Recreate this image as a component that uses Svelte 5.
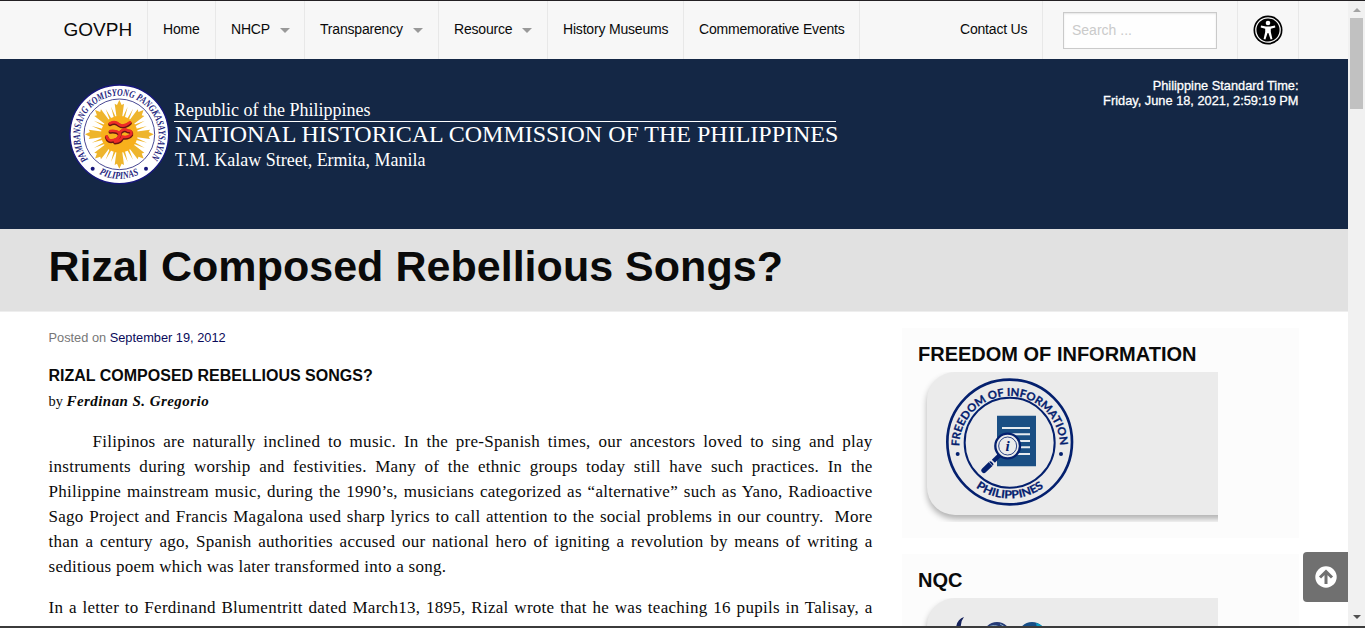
<script>
  const nav = [
    { label: 'Home', width: 68 },
    { label: 'NHCP', width: 89, menu: true },
    { label: 'Transparency', width: 134, menu: true },
    { label: 'Resource', width: 109, menu: true },
    { label: 'History Museums', width: 136 },
    { label: 'Commemorative Events', width: 176 }
  ];
  const lines = [
    'Filipinos are naturally inclined to music. In the pre-Spanish times, our ancestors loved to sing and play',
    'instruments during worship and festivities. Many of the ethnic groups today still have such practices. In the',
    'Philippine mainstream music, during the 1990’s, musicians categorized as “alternative” such as Yano, Radioactive',
    'Sago Project and Francis Magalona used sharp lyrics to call attention to the social problems in our country.\u00a0 More',
    'than a century ago, Spanish authorities accused our national hero of igniting a revolution by means of writing a',
    'seditious poem which was later transformed into a song.'
  ];
  const rays = [0, 45, 90, 135, 180, 225, 270, 315];
</script>

<div class="window">
  <div class="page">
    <nav>
      <a class="brand" href="#top">GOVPH</a>
      {#each nav as item}
        <a class="item" href="#top" style="width: {item.width}px">
          {item.label}
          {#if item.menu}<i class="caret"></i>{/if}
        </a>
      {/each}
      <a class="item contact" href="#top">Contact Us</a>
      <div class="search"><input type="text" placeholder="Search ..." /></div>
      <div class="access">
        <svg width="30" height="30" viewBox="0 0 30 30">
          <circle cx="15" cy="15" r="14.5" />
          <circle cx="15" cy="15" r="12.2" fill="none" stroke="#f7f7f7" stroke-width="1.3" />
          <circle cx="15" cy="8" r="2.3" fill="#fff" />
          <path d="M8 10.6l5 1h4l5-1 .3 1.8-4.5 1.4v3.2l1.6 7-1.8.6L15.4 18h-.8l-2.2 6.6-1.8-.6 1.6-7v-3.2L7.7 12.4z" fill="#fff" />
        </svg>
      </div>
    </nav>

    <header>
      <svg class="seal" width="120" height="120" viewBox="0 0 360 360">
        <defs>
          <path id="sealTop" d="M85 253A118 118 0 1 1 271 253" />
          <path id="sealBottom" d="M117 297A134 134 0 0 0 239 297" />
        </defs>
        <circle cx="178" cy="178" r="148" fill="#fff" stroke="#17177c" stroke-width="4" />
        <circle cx="178" cy="178" r="106" fill="#fff" stroke="#24247d" stroke-width="2.5" />
        {#each rays as angle}
          <g transform="rotate({angle} 178 178)" fill="#eeb52c">
            <path d="M170 130L164 86l7 4 7-15 7 15 7-4-6 44z" />
            <path d="M162 130l-9-35 15 33zM194 130l9-35-15 33z" />
          </g>
        {/each}
        <circle cx="178" cy="178" r="55" fill="#f8b01c" />
        <g fill="none" stroke-linecap="round" stroke-linejoin="round">
          <path d="M150 148q16-9 27 3 14 10 33-6M140 187q4 16 20 11 20-3 20-20-12-10-29-7M177 178q15-19 27-8 12-1 10 10-9 12-27 8-4 14-22 15" stroke="#6b1512" stroke-width="11" />
          <path d="M150 145q16-9 27 3 14 10 33-6M140 184q4 16 20 11 20-3 20-20-12-10-29-7M177 175q15-19 27-8 12-1 10 10-9 12-27 8-4 14-22 15" stroke="#ee2b27" stroke-width="8" />
        </g>
        <g class="sealtext">
          <text><textPath href="#sealTop" textLength="522" lengthAdjust="spacingAndGlyphs">PAMBANSANG KOMISYONG PANGKASAYSAYAN</textPath></text>
          <text><textPath href="#sealBottom" textLength="124" lengthAdjust="spacingAndGlyphs">PILIPINAS</textPath></text>
        </g>
        <circle cx="98" cy="281" r="6" fill="#17177c" />
        <circle cx="258" cy="281" r="6" fill="#17177c" />
      </svg>
      <div class="agency">
        <div class="republic">Republic of the Philippines</div>
        <div class="commission">NATIONAL HISTORICAL COMMISSION OF THE PHILIPPINES</div>
        <div class="address">T.M. Kalaw Street, Ermita, Manila</div>
      </div>
      <div class="time">Philippine Standard Time:<br />Friday, June 18, 2021, 2:59:19 PM</div>
    </header>

    <div class="banner"><h1>Rizal Composed Rebellious Songs?</h1></div>

    <div class="columns">
      <article>
        <div class="meta">Posted on <a href="#top">September 19, 2012</a></div>
        <h2>RIZAL COMPOSED REBELLIOUS SONGS?</h2>
        <div class="by">by <b>Ferdinan S. Gregorio</b></div>
        <div class="para">
          {#each lines as line, i}
            <div class="line" class:indent={i === 0} class:last={i === 5}>{line}</div>
          {/each}
        </div>
        <div class="para">
          <div class="line">In a letter to Ferdinand Blumentritt dated March13, 1895, Rizal wrote that he was teaching 16 pupils in Talisay, a</div>
        </div>
      </article>

      <aside>
        <section>
          <h3>FREEDOM OF INFORMATION</h3>
          <div class="picture">
            <div class="plate">
              <svg class="foi" width="140" height="140" viewBox="0 0 420 420">
                <defs>
                  <path id="foiTop" d="M58 223A151 151 0 1 1 360 223" />
                  <path id="foiBottom" d="M74 314A172 172 0 0 0 344 314" />
                </defs>
                <circle cx="209" cy="210" r="187" fill="#eaeaea" stroke="#04206e" stroke-width="8" />
                <circle cx="209" cy="212" r="135" fill="none" stroke="#04206e" stroke-width="6" />
                <g class="foitext">
                  <text><textPath href="#foiTop" textLength="472" lengthAdjust="spacingAndGlyphs">FREEDOM OF INFORMATION</textPath></text>
                  <text><textPath href="#foiBottom" startOffset="47" textLength="218" lengthAdjust="spacingAndGlyphs">PHILIPPINES</textPath></text>
                </g>
                <circle cx="53" cy="246" r="6" fill="#04206e" />
                <circle cx="363" cy="246" r="6" fill="#04206e" />
                <path d="M171 131h117v152H171z" fill="#1a4f84" />
                <path d="M186 168h84M210 187h60M230 207h40M230 226h40M220 246h50" stroke="#e6ebf0" stroke-width="6" />
                <path d="M180 248l-20 20" stroke="#04206e" stroke-width="13" />
                <path d="M152 276l-20 19" stroke="#04206e" stroke-width="16" stroke-linecap="round" />
                <path d="M146 269l13 14M151 264l13 14" stroke="#eaeaea" stroke-width="2" />
                <circle cx="203" cy="222" r="37" fill="#ebebeb" stroke="#04206e" stroke-width="7" />
                <circle cx="203" cy="222" r="27" fill="none" stroke="#04206e" stroke-width="2.5" />
                <text class="info" x="203" y="238" text-anchor="middle">i</text>
              </svg>
            </div>
          </div>
        </section>
        <section>
          <h3>NQC</h3>
          <div class="picture">
            <div class="plate">
              <svg class="nqc" width="140" height="30" viewBox="0 0 140 30">
                <path d="M16 30q1-9 8-11-4 5-3 11z" fill="#16235c" />
                <circle cx="57" cy="38" r="14" fill="#243a76" />
                <path d="M48 29q7-3 11 0M60 26l5 3" stroke="#84a5bf" fill="none" />
                <circle cx="92" cy="38" r="14" fill="#174e87" />
                <path d="M96 25q5 1 8 5h-7z" fill="#0a9ac2" />
              </svg>
            </div>
          </div>
        </section>
      </aside>
    </div>
  </div>

  <div class="scrollbar">
    <i class="up"></i>
    <div class="thumb"></div>
    <i class="down"></i>
  </div>

  <a class="totop" href="#top" aria-label="Back to top">
    <svg width="22" height="22" viewBox="0 0 22 22">
      <circle cx="11" cy="11" r="10.7" fill="#fff" />
      <path d="M11 18V6M5 11.5l6-6 6 6" fill="none" stroke="#707070" stroke-width="3" />
    </svg>
  </a>
</div>

<style>
  :global(body) { overflow: hidden; background: #fff; }
  * { box-sizing: border-box; }
  a { color: inherit; text-decoration: none; }
  svg { display: block; }
  .window {
    position: relative;
    display: flex;
    width: 1365px;
    height: 628px;
    overflow: hidden;
    border-top: 1px solid #232023;
    border-bottom: 2px solid #3b3b3b;
    font-family: "Liberation Sans", Arial, sans-serif;
    color: #0a0a0a;
  }
  .page { width: 1348px; height: 625px; overflow: hidden; }
  nav { display: flex; height: 58px; padding-left: 49px; background: #f7f7f7; font-size: 14px; line-height: 57px; }
  .brand { width: 99px; padding-left: 14.5px; border-right: 1px solid #e8e8e8; font-size: 19px; }
  .item { display: flex; align-items: center; padding-left: 15px; border-right: 1px solid #e8e8e8; white-space: nowrap; line-height: 56px; padding-bottom: 2px; letter-spacing: -.19px; }
  .caret { margin: 3px 0 0 10px; border: 5px solid transparent; border-top-color: #999; border-bottom: 0; }
  .contact { width: 98px; margin-left: 85px; }
  .search { width: 195px; padding: 11px 20px; border-right: 1px solid #e8e8e8; }
  input { display: block; width: 154px; height: 37px; padding: 0 8px 2px; border: 1px solid #cacaca; border-radius: 0; background: #fefefe; box-shadow: inset 0 1px 2px rgba(10, 10, 10, .1); font: 14px "Liberation Sans", Arial, sans-serif; }
  input::placeholder { color: #cacaca; }
  .access { width: 61px; padding: 14px 0 0 15px; border-right: 1px solid #e8e8e8; }
  header { display: flex; height: 170px; padding-left: 60px; background: #142745; color: #fff; }
  .seal { margin-top: 16px; flex: none; }
  .sealtext { font: italic bold 31px "Liberation Serif", serif; fill: #24247d; }
  .agency { margin: 40px 0 0 -6px; width: 670px; font-family: "Liberation Serif", "Times New Roman", serif; white-space: nowrap; font-size: 18px; }
  .republic { height: 23px; width: 662px; line-height: 22px; border-bottom: 1px solid #fff; }
  .commission { padding-left: 1px; height: 26px; font-size: 24px; line-height: 25px; }
  .address { padding-left: 1px; line-height: 25px; }
  .time { margin: 20px 49.5px 0 auto; text-align: right; font-size: 12.8px; line-height: 14.7px; -webkit-text-stroke: .3px #fff; }
  .banner { height: 83px; padding: 12px 0 0 48.5px; background: #e1e1e1; border-bottom: 1px solid #eee; }
  h1 { margin: 0; font-size: 43px; line-height: 50px; letter-spacing: .03px; }
  .columns { display: flex; justify-content: space-between; padding: 16px 49px 0 48.5px; }
  article { width: 824px; }
  .meta { line-height: 20px; font-size: 12.8px; color: #777; }
  .meta a { color: #0a0a5a; }
  h2 { margin: 17px 0 0; font-size: 16px; line-height: 22px; }
  .by { margin-top: 3px; font: 14.4px/22px "Liberation Serif", Georgia, serif; }
  .by b { font-style: italic; font-size: 15px; letter-spacing: .44px; }
  .para { margin: 17px 0 0; font: 17px/25px "Liberation Serif", Georgia, serif; letter-spacing: .27px; }
  .para + .para { margin-top: 16px; }
  .line { height: 25px; text-align: justify; text-align-last: justify; }
  .indent { padding-left: 44px; }
  .last { text-align-last: left; }
  aside { width: 397px; }
  section { height: 210px; margin-bottom: 16px; padding: 12px 16px 0; background: #fcfcfc; }
  h3 { margin: 0; height: 32px; font-size: 20px; line-height: 28px; }
  .picture { width: 300px; height: 150px; padding-left: 9px; overflow: hidden; }
  .plate { width: 330px; height: 143px; border-radius: 28px 0 0 28px; background: #ebebeb; box-shadow: 0 4px 6px rgba(0, 0, 0, .3); }
  .foi { margin-left: 13px; }
  .foitext { font: bold 33px Lato, sans-serif; fill: #04206e; stroke: #04206e; stroke-width: .8px; }
  .info { font: italic bold 45px "Liberation Serif", serif; fill: #04206e; }
  .nqc { margin-left: 13px; }
  .scrollbar { display: flex; flex-direction: column; align-items: center; width: 17px; background: #f1f1f1; }
  .up { margin-top: 7px; border: 4px solid transparent; border-top: 0; border-bottom-color: #a3a3a3; }
  .thumb { margin-top: 6px; width: 13px; height: 91px; background: #c1c1c1; }
  .down { margin: auto 0 7px; border: 4px solid transparent; border-bottom: 0; border-top-color: #505050; }
  .totop { position: absolute; right: 17px; top: 551px; display: grid; place-items: center; width: 45px; height: 50px; border-radius: 4px 0 0 4px; background: #707070; }
</style>
